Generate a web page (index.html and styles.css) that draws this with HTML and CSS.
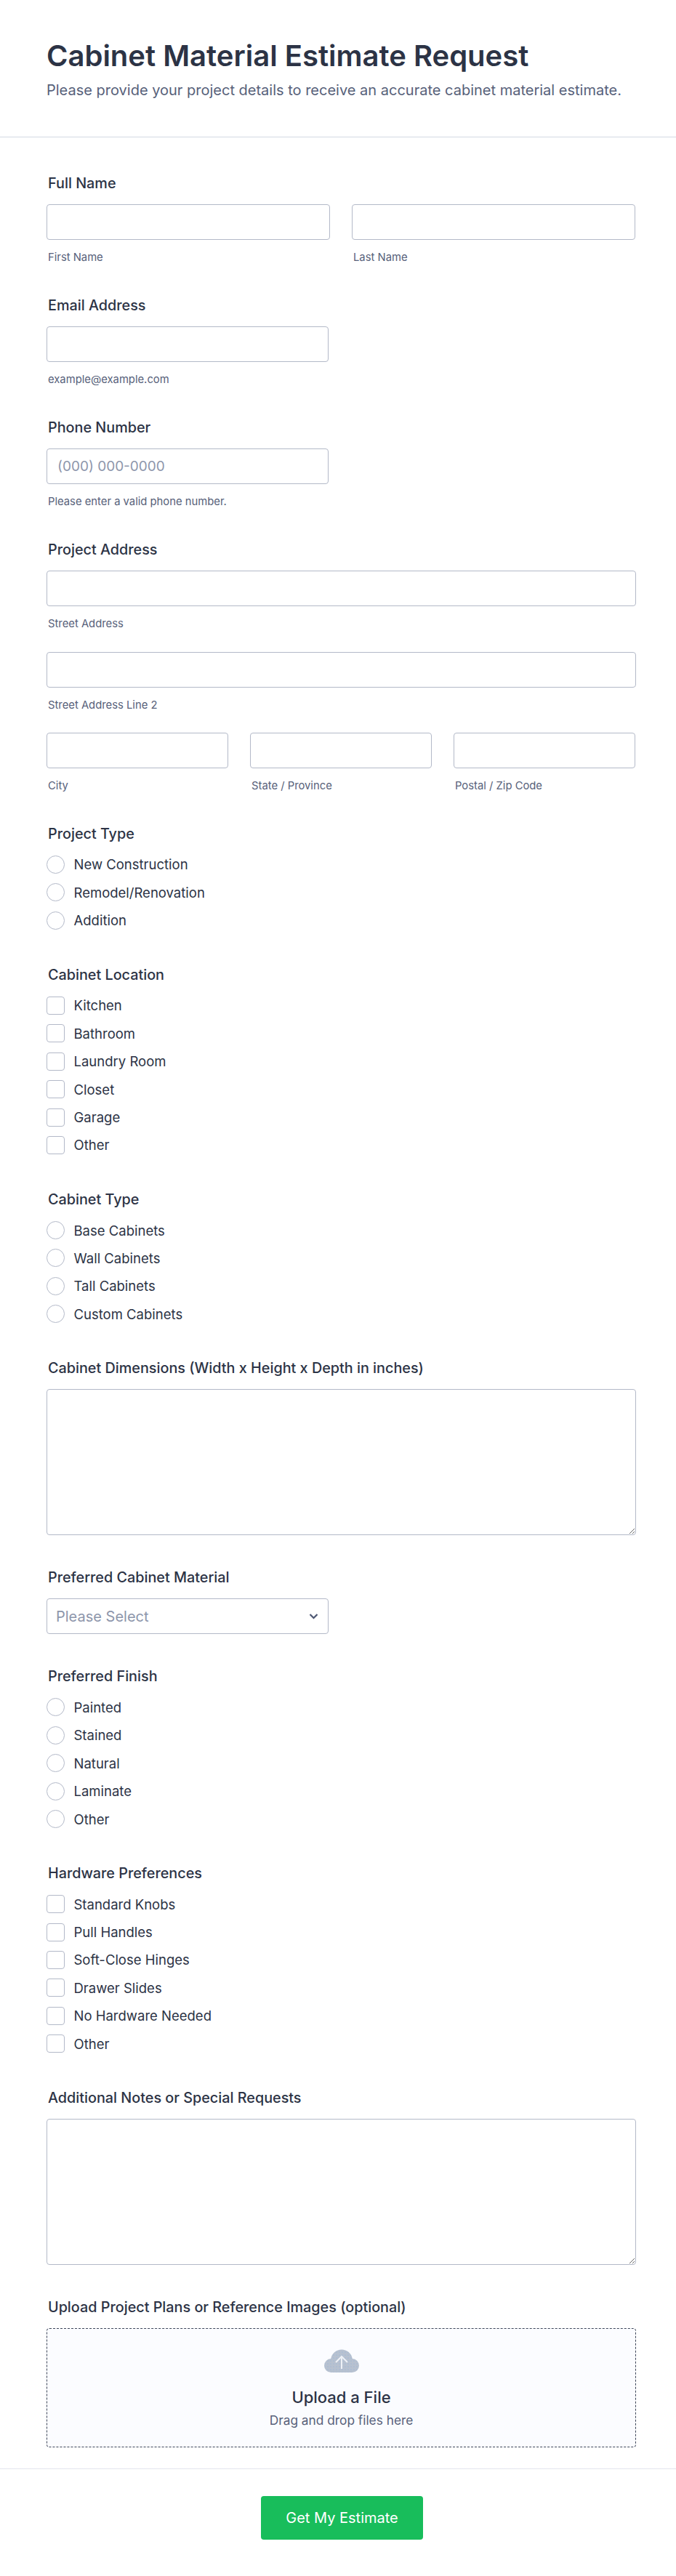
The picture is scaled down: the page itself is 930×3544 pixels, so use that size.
FILE: index.html
```html
<!DOCTYPE html>
<html lang="en">
<head>
<meta charset="utf-8">
<title>Cabinet Material Estimate Request</title>
<link rel="stylesheet" href="styles.css">
</head>
<body>
<header class="head">
  <h1>Cabinet Material Estimate Request</h1>
  <p>Please provide your project details to receive an accurate cabinet material estimate.</p>
</header>
<form class="form">
  <section class="field">
    <div class="label">Full Name</div>
    <div class="row two">
      <label class="part"><input class="box" type="text"><span class="sub">First Name</span></label>
      <label class="part"><input class="box" type="text"><span class="sub">Last Name</span></label>
    </div>
  </section>
  <section class="field half">
    <div class="label">Email Address</div>
    <label class="part"><input class="box" type="text"><span class="sub">example@example.com</span></label>
  </section>
  <section class="field half">
    <div class="label">Phone Number</div>
    <label class="part"><input class="box" type="text" placeholder="(000) 000-0000"><span class="sub">Please enter a valid phone number.</span></label>
  </section>
  <section class="field">
    <div class="label">Project Address</div>
    <div class="stack">
      <label class="part"><input class="box" type="text"><span class="sub">Street Address</span></label>
      <label class="part"><input class="box" type="text"><span class="sub">Street Address Line 2</span></label>
      <div class="row three">
        <label class="part"><input class="box" type="text"><span class="sub">City</span></label>
        <label class="part"><input class="box" type="text"><span class="sub">State / Province</span></label>
        <label class="part"><input class="box" type="text"><span class="sub">Postal / Zip Code</span></label>
      </div>
    </div>
  </section>
  <section class="field opts">
    <div class="label">Project Type</div>
    <label class="opt"><input type="radio" name="a"><span>New Construction</span></label>
    <label class="opt"><input type="radio" name="a"><span>Remodel/Renovation</span></label>
    <label class="opt"><input type="radio" name="a"><span>Addition</span></label>
  </section>
  <section class="field opts">
    <div class="label">Cabinet Location</div>
    <label class="opt"><input type="checkbox"><span>Kitchen</span></label>
    <label class="opt"><input type="checkbox"><span>Bathroom</span></label>
    <label class="opt"><input type="checkbox"><span>Laundry Room</span></label>
    <label class="opt"><input type="checkbox"><span>Closet</span></label>
    <label class="opt"><input type="checkbox"><span>Garage</span></label>
    <label class="opt"><input type="checkbox"><span>Other</span></label>
  </section>
  <section class="field opts">
    <div class="label">Cabinet Type</div>
    <label class="opt"><input type="radio" name="b"><span>Base Cabinets</span></label>
    <label class="opt"><input type="radio" name="b"><span>Wall Cabinets</span></label>
    <label class="opt"><input type="radio" name="b"><span>Tall Cabinets</span></label>
    <label class="opt"><input type="radio" name="b"><span>Custom Cabinets</span></label>
  </section>
  <section class="field tall">
    <div class="label">Cabinet Dimensions (Width x Height x Depth in inches)</div>
    <textarea class="box area"></textarea>
  </section>
  <section class="field half tall">
    <div class="label">Preferred Cabinet Material</div>
    <div class="select box">
      <span>Please Select</span>
      <svg class="chev" width="13" height="8" viewBox="0 0 13 8"><path d="M1.500 1 6.500 6l5-5" fill="none" stroke="#4c5672" stroke-width="2.200"/></svg>
    </div>
  </section>
  <section class="field opts">
    <div class="label">Preferred Finish</div>
    <label class="opt"><input type="radio" name="c"><span>Painted</span></label>
    <label class="opt"><input type="radio" name="c"><span>Stained</span></label>
    <label class="opt"><input type="radio" name="c"><span>Natural</span></label>
    <label class="opt"><input type="radio" name="c"><span>Laminate</span></label>
    <label class="opt"><input type="radio" name="c"><span>Other</span></label>
  </section>
  <section class="field opts">
    <div class="label">Hardware Preferences</div>
    <label class="opt"><input type="checkbox"><span>Standard Knobs</span></label>
    <label class="opt"><input type="checkbox"><span>Pull Handles</span></label>
    <label class="opt"><input type="checkbox"><span>Soft-Close Hinges</span></label>
    <label class="opt"><input type="checkbox"><span>Drawer Slides</span></label>
    <label class="opt"><input type="checkbox"><span>No Hardware Needed</span></label>
    <label class="opt"><input type="checkbox"><span>Other</span></label>
  </section>
  <section class="field tall">
    <div class="label">Additional Notes or Special Requests</div>
    <textarea class="box area"></textarea>
  </section>
  <section class="field last">
    <div class="label">Upload Project Plans or Reference Images (optional)</div>
    <div class="drop">
      <svg class="cloud" width="48" height="33" viewBox="0 0 48 33">
        <defs>
          <pattern id="dots" width="4" height="4" patternUnits="userSpaceOnUse"><rect width="4" height="4" fill="#b7c1d0"/><circle cx="1" cy="1" r=".6" fill="#8fb4dc"/></pattern>
        </defs>
        <path d="M9.500 33A9.500 9.500 0 0 1 0 23.500 9.500 9.500 0 0 1 9.200 14 15 15 0 0 1 38.800 14 9.500 9.500 0 0 1 48 23.500 9.500 9.500 0 0 1 38.500 33Z" fill="url(#dots)"/>
        <path d="M24 28V11M16 19l8-8 8 8" fill="none" stroke="#eef1f6" stroke-width="2"/>
      </svg>
      <div class="drop-title">Upload a File</div>
      <div class="drop-sub">Drag and drop files here</div>
    </div>
  </section>
</form>
<footer class="foot"><button class="submit" type="button">Get My Estimate</button></footer>
</body>
</html>
```
FILE: styles.css
```css
* { box-sizing: border-box; }
html, body { margin: 0; padding: 0; }
body { background: #fff; color: #2c3345; font-family: Inter, "Liberation Sans", sans-serif; width: 930px; }
.head { height: 189px; padding: 52px 64px 0; border-bottom: 1px solid #d3d8e2; }
.head h1 { margin: 0; font-size: 40px; line-height: 50px; font-weight: 600; color: #2c3345; }
.head p { margin: 8px 0 0; font-size: 20px; line-height: 28px; color: #57617a; }
.form { padding: 51px 55px 0 64px; }
.field { margin-bottom: 45px; }
.half { width: 388px; }
.label { font-size: 19.800px; line-height: 24px; font-weight: 450; padding-left: 2px; margin-bottom: 17px; color: #2c3345; }
.row { display: grid; gap: 30px; }
.two { grid-template-columns: 390px 390px; }
.three { grid-template-columns: 250px 250px 250px; }
.stack { display: flex; flex-direction: column; gap: 29.500px; }
.part { display: block; }
.box { display: block; width: 100%; height: 49px; border: 1px solid #b3b9c8; border-radius: 4px; background: #fff; font: 19px Inter, sans-serif; padding: 0 14px; color: #2c3345; outline: 0; }
.box::placeholder { color: #8d96ab; opacity: 1; }
.sub { display: block; font-size: 14.800px; line-height: 18px; color: #57617a; margin-top: 15px; padding-left: 2px; }
.area { height: 201px; padding: 8px; resize: both; }
.select { display: flex; align-items: center; justify-content: space-between; color: #8d96ab; font-size: 20px; padding: 0 13px 0 12px; }
.opts { margin-bottom: 43.500px; }
.opts .label { margin-bottom: 11.300px; }
.tall { margin-bottom: 46px; }
.opt { display: flex; align-items: center; gap: 12.500px; height: 38.400px; font-size: 18.500px; color: #2c3345; }
.opt input { appearance: none; margin: 0; width: 25px; height: 25px; background: #fff; border: 1px solid #b3b9c8; flex: none; }
.opt input[type=radio] { border-radius: 50%; }
.opt input[type=checkbox] { border-radius: 4px; }
.last { margin-bottom: 29px; }
.drop { height: 164px; border: 1px dashed #3e4659; border-radius: 4px; background: #fbfcff; display: flex; flex-direction: column; align-items: center; padding-top: 27px; }
.cloud { display: block; }
.drop-title { font-size: 22px; line-height: 28px; font-weight: 500; margin-top: 20px; }
.drop-sub { font-size: 17.300px; line-height: 24px; color: #57617a; margin-top: 6px; }
.foot { border-top: 1px solid #e3e5ec; padding: 37px 0 49px 11px; display: flex; justify-content: center; }
.submit { width: 223px; height: 60px; border: 0; border-radius: 4px; background: #18bd5b; color: #fff; font: 400 20px Inter, sans-serif; }
```
